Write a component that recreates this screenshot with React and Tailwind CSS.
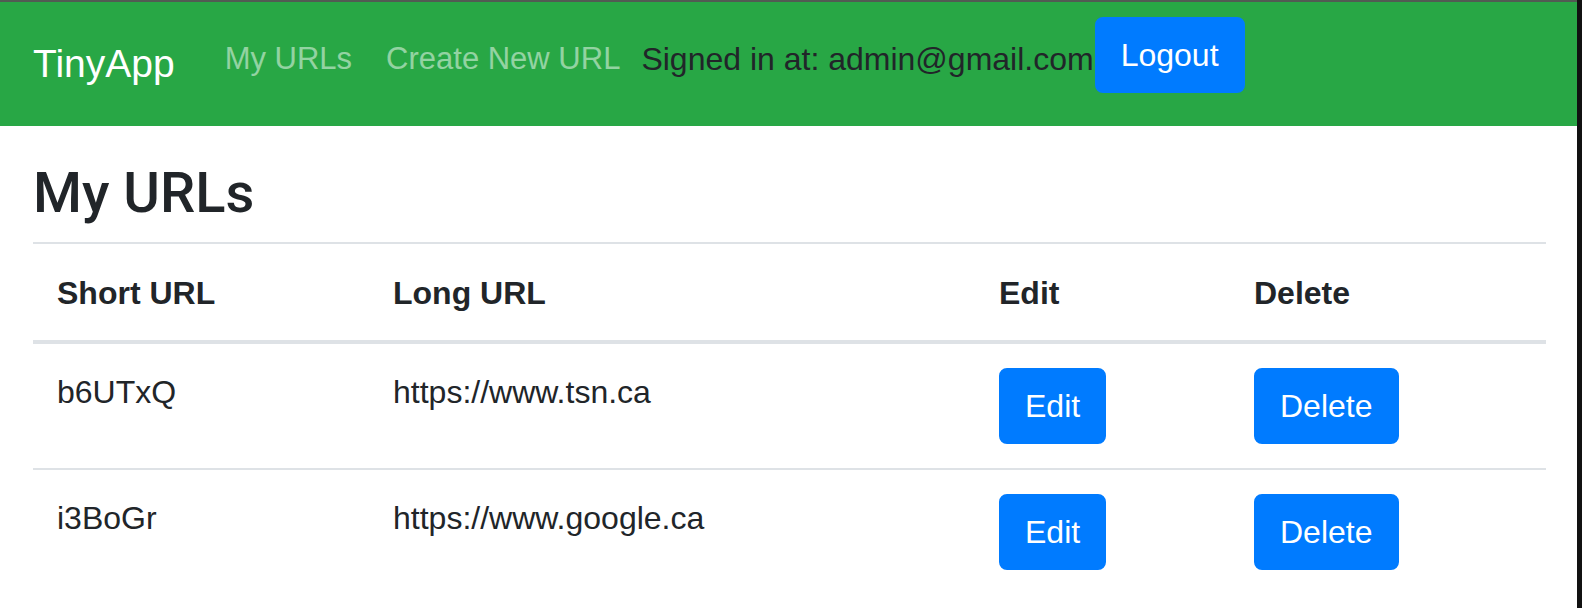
import React from "react";

const rows = [
  { short: "b6UTxQ", long: "https://www.tsn.ca" },
  { short: "i3BoGr", long: "https://www.google.ca" },
];

function Btn({ children }) {
  return (
    <button className="rounded-[8px] border-2 border-[#007bff] bg-[#007bff] px-[24px] py-[12px] text-[32px] leading-[48px] text-white">
      {children}
    </button>
  );
}

export default function App() {
  return (
    <div
      className="flex h-[608px] w-[1582px] overflow-hidden bg-white text-[#212529]"
      style={{ fontFamily: '"Liberation Sans", Arial, sans-serif' }}
    >
      <div className="flex min-w-0 flex-1 flex-col">
        <div className="h-[2px] bg-[#525a53]" />
        <nav className="flex h-[124px] items-start bg-[#28a745] pl-[33px]">
          <a className="mt-[32px] mr-[34px] text-[39px] leading-[60px] text-white">TinyApp</a>
          <a className="mt-[33px] px-[16px] text-[31px] leading-[48px] text-white/50">My URLs</a>
          <a className="mt-[33px] pl-[18px] pr-[21px] text-[31px] leading-[48px] text-white/50">Create New URL</a>
          <span className="mt-[33px] text-[32px] leading-[48px] text-[#212529]">
            Signed in at: admin@gmail.com
          </span>
          <div className="mt-[15px] ml-[1px]">
            <Btn>Logout</Btn>
          </div>
        </nav>
        <main className="pl-[33px] pr-[31px]">
          <h1
            className="mt-[34px] mb-[16px] text-[56px] leading-[66px] font-medium"
            style={{ fontFamily: "Roboto, sans-serif" }}
          >
            My URLs
          </h1>
          <div className="grid grid-cols-[336px_606px_255px_1fr] text-[32px] leading-[48px]">
            {["Short URL", "Long URL", "Edit", "Delete"].map((h) => (
              <div
                key={h}
                className="border-t-2 border-b-4 border-[#dee2e6] px-[24px] pt-[25px] pb-[23px] font-bold"
              >
                {h}
              </div>
            ))}
            {rows.map((r, i) => (
              <React.Fragment key={r.short}>
                <div className={`${i > 0 ? "border-t-2 border-[#dee2e6]" : ""} p-[24px]`}>{r.short}</div>
                <div className={`${i > 0 ? "border-t-2 border-[#dee2e6]" : ""} p-[24px]`}>{r.long}</div>
                <div className={`${i > 0 ? "border-t-2 border-[#dee2e6]" : ""} p-[24px]`}>
                  <Btn>Edit</Btn>
                </div>
                <div className={`${i > 0 ? "border-t-2 border-[#dee2e6]" : ""} p-[24px]`}>
                  <Btn>Delete</Btn>
                </div>
              </React.Fragment>
            ))}
          </div>
        </main>
      </div>
      <div className="w-[5px] bg-[#111111]" />
    </div>
  );
}
